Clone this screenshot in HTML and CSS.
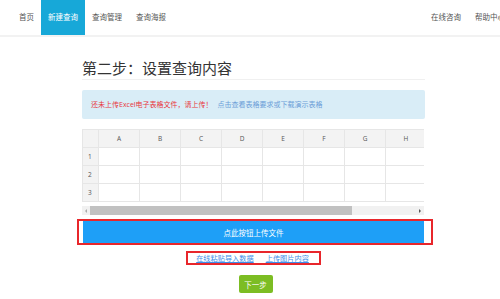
FILE: index.html
```html
<!DOCTYPE html>
<html lang="zh-CN">
<head>
    <meta charset="UTF-8">
    <title>设置查询内容</title>
    <link rel="stylesheet" href="styles.css">
</head>
<body>
    <div class="topbar">
        <div class="nav">
            <a class="nav-item" href="#">首页</a>
            <a class="nav-item active" href="#">新建查询</a>
            <a class="nav-item" href="#">查询管理</a>
            <a class="nav-item" href="#">查询海报</a>
        </div>
        <div class="nav nav-right">
            <a class="nav-item" href="#">在线咨询</a>
            <a class="nav-item" href="#">帮助中心</a>
        </div>
    </div>

    <div class="main">
        <h1 class="page-title">第二步：设置查询内容</h1>

        <div class="alert">
            <span class="alert-warn">还未上传Excel电子表格文件，请上传！</span>
            <a class="alert-link" href="#">点击查看表格要求或下载演示表格</a>
        </div>

        <div class="sheet">
            <table class="grid">
                <colgroup>
                    <col class="col-num">
                    <col><col><col><col><col><col><col><col>
                </colgroup>
                <tr>
                    <th></th>
                    <th>A</th><th>B</th><th>C</th><th>D</th><th>E</th><th>F</th><th>G</th><th>H</th>
                </tr>
                <tr>
                    <th class="rownum">1</th>
                    <td></td><td></td><td></td><td></td><td></td><td></td><td></td><td></td>
                </tr>
                <tr>
                    <th class="rownum">2</th>
                    <td></td><td></td><td></td><td></td><td></td><td></td><td></td><td></td>
                </tr>
                <tr>
                    <th class="rownum">3</th>
                    <td></td><td></td><td></td><td></td><td></td><td></td><td></td><td></td>
                </tr>
            </table>
        </div>
        <div class="hscroll">
            <span class="arrow arrow-left"></span>
            <span class="thumb"></span>
            <span class="arrow arrow-right"></span>
        </div>

        <div class="mark mark-upload">
            <button class="btn-upload">点此按钮上传文件</button>
        </div>

        <div class="links-row">
            <div class="mark mark-links">
                <a href="#">在线粘贴导入数据</a>
                <a href="#">上传图片内容</a>
            </div>
        </div>

        <div class="next-row">
            <button class="btn-next">下一步</button>
        </div>
    </div>
</body>
</html>
```

FILE: styles.css
```css
body {
    margin: 0;
    font-family: "Open Sans", "Noto Sans CJK SC", sans-serif;
    background: #fff;
    overflow: hidden;
}
a {
    text-decoration: none;
}
.topbar {
    display: flex;
    justify-content: space-between;
    height: 35px;
    padding-left: 12px;
    border-bottom: 2px solid #f2f2f2;
    overflow: hidden;
}
.nav {
    display: flex;
}
.nav-right {
    margin-right: -12px;
}
.nav-item {
    display: block;
    padding: 0 7px;
    line-height: 35px;
    font-size: 7.5px;
    color: #555;
    white-space: nowrap;
}
.nav-item.active {
    background: #17a8d8;
    color: #fff;
}
.main {
    width: 343px;
    margin-left: 82px;
}
.page-title {
    margin: 21px 0 0;
    padding-bottom: 1px;
    font-size: 15px;
    line-height: 20px;
    font-weight: normal;
    color: #333;
    border-bottom: 1px solid #f0f0f0;
}
.alert {
    margin-top: 10px;
    height: 29px;
    line-height: 29px;
    padding-left: 9px;
    background: #d9edf7;
    border-radius: 2px;
    font-size: 7px;
}
.alert-warn {
    color: #e8383d;
}
.alert-link {
    margin-left: 3px;
    color: #6c9ed8;
}
.sheet {
    width: 342px;
    margin-top: 10px;
    overflow: hidden;
}
.grid {
    width: 344px;
    border-collapse: collapse;
    table-layout: fixed;
}
.grid col {
    width: 41px;
}
.grid .col-num {
    width: 16px;
}
.grid th,
.grid td {
    height: 17px;
    padding: 0;
    border: 1px solid #e6e6e6;
    font-size: 6.5px;
    font-weight: normal;
    color: #555;
    text-align: center;
}
.grid th {
    background: #f3f3f3;
}
.grid .rownum {
    text-align: left;
    padding-left: 5px;
}
.hscroll {
    display: flex;
    align-items: center;
    width: 342px;
    height: 9px;
    margin-top: 4px;
    background: #f1f1f1;
}
.arrow {
    width: 0;
    height: 0;
    border-top: 2px solid transparent;
    border-bottom: 2px solid transparent;
}
.arrow-left {
    margin: 0 3px 0 3px;
    border-right: 2px solid #aaa;
}
.arrow-right {
    margin: 0 3px 0 auto;
    border-left: 2px solid #555;
}
.thumb {
    width: 262px;
    height: 9px;
    background: #c1c1c1;
}
.mark {
    box-sizing: border-box;
    border: 2px solid #e8262b;
}
.mark-upload {
    width: 356px;
    margin: 4px 0 0 -5px;
    padding: 0 7px 0 4px;
}
.btn-upload {
    display: block;
    width: 100%;
    height: 22px;
    padding: 0;
    border: none;
    background: #1e9ff7;
    color: #fff;
    font-family: inherit;
    font-size: 7.5px;
    cursor: pointer;
}
.links-row {
    display: flex;
    justify-content: center;
    margin-top: 6px;
}
.mark-links {
    display: flex;
    gap: 12px;
    height: 14px;
    padding: 0 10px 0 8px;
    align-items: center;
}
.mark-links a {
    font-size: 7.2px;
    color: #3e8ee8;
    text-decoration: underline;
    white-space: nowrap;
}
.next-row {
    display: flex;
    justify-content: center;
    margin-top: 10px;
}
.btn-next {
    width: 34px;
    height: 18px;
    margin-left: 4px;
    padding: 0;
    border: none;
    border-radius: 2px;
    background: #7cbd23;
    color: #fff;
    font-family: inherit;
    font-size: 7.5px;
    white-space: nowrap;
    cursor: pointer;
}
```
